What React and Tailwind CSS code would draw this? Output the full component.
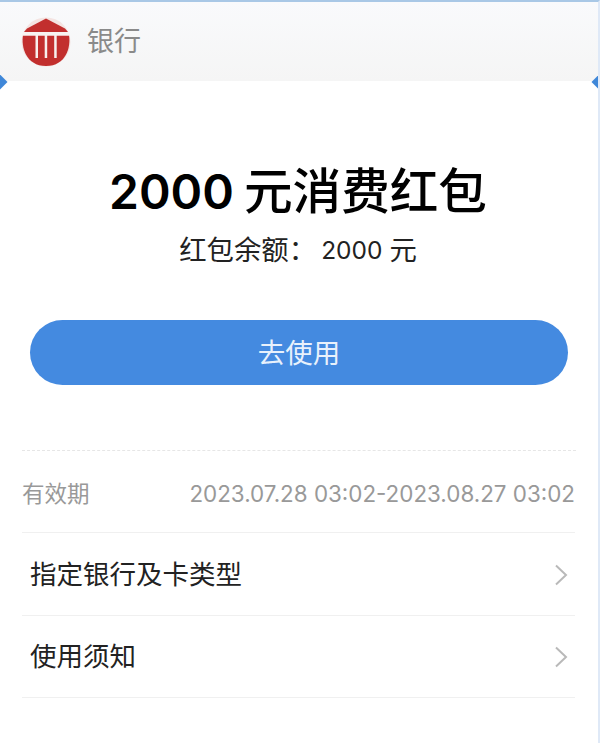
import React from 'react';

const cjk = { fontFamily: '"Inter", "Noto Sans CJK SC", sans-serif' };

function BankLogo() {
  return (
    <svg width="50" height="50" viewBox="0 0 50 50">
      <circle cx="25" cy="25" r="24.5" fill="#f4e4e2" />
      <path d="M25 1.5L44 11.5L47 15H3L6 11.5Z" fill="#c22f2e" />
      <path d="M2 18.5H48C50 30 45 49 25 49C5 49 0 30 2 18.5Z" fill="#c22f2e" />
      <rect x="2" y="15" width="46" height="3.5" fill="#f8f3f1" />
      <rect x="14.5" y="18" width="2.5" height="23" fill="#f8f0ee" />
      <rect x="23.7" y="18" width="2.5" height="23" fill="#f8f0ee" />
      <rect x="33.2" y="18" width="2.5" height="23" fill="#f8f0ee" />
    </svg>
  );
}

function Chevron() {
  return (
    <svg width="14" height="22" viewBox="0 0 14 22" fill="none" stroke="#b9b9b9" strokeWidth="2">
      <path d="M2 1.5L12 11L2 20.5" />
    </svg>
  );
}

function Row({ label }) {
  return (
    <div className="h-[82.5px] pt-[2px] ml-[22px] mr-[23px] pl-2 pr-[7px] flex items-center justify-between border-b border-[#f0f0f0]">
      <span className="text-[26.5px] text-[#222222]">{label}</span>
      <Chevron />
    </div>
  );
}

export default function App() {
  return (
    <div style={cjk} className="w-[600px] h-[743px] overflow-hidden bg-white flex flex-col border-t-2 border-[#a9c8e6] border-r-2 border-r-[#dfe9f7]">
      {/* Header */}
      <div className="h-[79px] shrink-0 bg-gradient-to-b from-[#f9fafc] to-[#f5f5f5] pl-[21px] flex items-center gap-4 relative">
        <BankLogo />
        <span className="text-[27px] text-[#8a8a8a] pt-[2px]">银行</span>
        <span className="absolute left-[-7px] bottom-[-7px] w-[12px] h-[12px] rotate-45 bg-[#3f87d8]" />
        <span className="absolute right-[-8px] bottom-[-7px] w-[12px] h-[12px] rotate-45 bg-[#3f87d8]" />
      </div>

      {/* Title */}
      <div className="flex flex-col items-center pt-[81px] pr-[2px]">
        <h1 className="text-[48.6px] leading-[60px] font-medium text-black flex items-center">
          <span className="font-semibold text-[48px] mr-[10px]">2000</span>
          <span>元消费红包</span>
        </h1>
        <p className="mt-[10px] text-[27.4px] leading-[36px] text-[#222222] flex items-center">
          <span>红包余额：</span>
          <span className="text-[24.5px] ml-[5px] mr-[7px]">2000</span>
          <span>元</span>
        </p>
      </div>

      <div className="mt-[52px] mx-[30px] h-[65px] pt-[3px] rounded-full bg-[#448ae0] flex items-center justify-center text-[27.5px] text-[#e8f1fc]">
        去使用
      </div>

      {/* Details */}
      <div className="mt-[65px] mx-[22px] border-t border-dashed border-[#e6e6e6]" />
      <div className="h-[82px] pt-[5px] ml-[22px] mr-[23px] flex items-center justify-between border-b border-[#f0f0f0]">
        <span className="text-[22.5px] text-[#999999]">有效期</span>
        <span className="text-[22.4px] text-[#999999]">2023.07.28 03:02-2023.08.27 03:02</span>
      </div>
      <Row label="指定银行及卡类型" />
      <Row label="使用须知" />
    </div>
  );
}
